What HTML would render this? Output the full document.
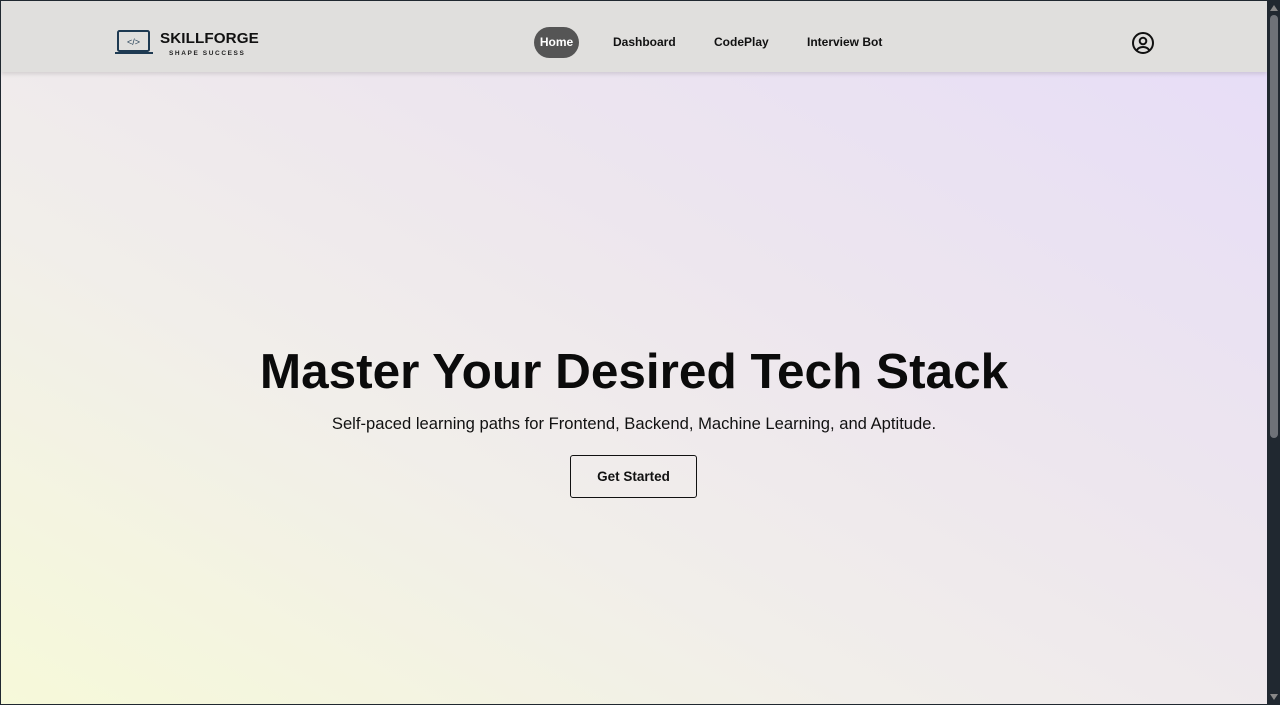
<!DOCTYPE html>
<html><head><meta charset="utf-8"><style>
*{margin:0;padding:0;box-sizing:border-box}
html,body{width:1280px;height:705px;overflow:hidden;font-family:"Liberation Sans",Arial,sans-serif}
body{background:#202830;position:relative}
.page{position:absolute;left:1px;top:1px;width:1266px;height:703px;overflow:hidden;
background:linear-gradient(to top right,#f6f9d9 0%,#f1eeea 35%,#ede6ee 60%,#e6dcf8 100%)}
header{position:absolute;left:0;top:0;width:100%;height:71px;background:#e0dfdd;box-shadow:0 2px 4px rgba(0,0,0,0.12)}
.logo{position:absolute;left:113px;top:28px}
.brand{position:absolute;left:159px;top:29px;font-weight:bold;font-size:15.2px;letter-spacing:0.1px;color:#111}
.tag{position:absolute;left:168px;top:49px;font-size:6.5px;letter-spacing:1.6px;color:#222;font-weight:bold}
nav a{position:absolute;top:26px;height:31px;line-height:31px;font-size:12px;font-weight:bold;color:#111;text-decoration:none}
.home{left:533px;width:45px;text-align:center;background:#555;color:#fff!important;border-radius:16px}
.user{position:absolute;left:1130px;top:30px}
h1{position:absolute;left:0;width:1266px;top:342px;text-align:center;font-size:49.5px;font-weight:bold;color:#0b0b0b}
p{position:absolute;left:0;width:1266px;top:413px;text-align:center;font-size:16.6px;color:#111}
.btn{position:absolute;left:569px;top:454px;width:127px;height:43px;border:1.5px solid #111;border-radius:3px;text-align:center;line-height:41px;font-size:13.5px;font-weight:bold;color:#111}
.sb{position:absolute;left:1267px;top:0;width:13px;height:705px;background:#202830}
.thumb{position:absolute;left:1270px;top:15px;width:8px;height:423px;background:#6e7278;border-radius:4px}
</style></head><body>
<div class="page">
<header>
<svg class="logo" width="40" height="28" viewBox="0 0 40 28"><rect x="4" y="2" width="31" height="20" rx="1.5" fill="none" stroke="#1e3a52" stroke-width="2"/><path d="M1 23h38v2H1z" fill="#1e3a52"/><text x="19.5" y="16" text-anchor="middle" font-family="Liberation Sans" font-size="9" fill="#1e3a52">&lt;/&gt;</text></svg>
<div class="brand">SKILLFORGE</div>
<div class="tag">SHAPE SUCCESS</div>
<nav><a class="home">Home</a><a style="left:612px">Dashboard</a><a style="left:713px">CodePlay</a><a style="left:806px">Interview Bot</a></nav>
<svg class="user" width="24" height="24" viewBox="0 0 24 24" fill="none" stroke="#111" stroke-width="2"><circle cx="12" cy="12" r="10"/><circle cx="12" cy="10" r="3.3"/><path d="M5.5 19.5c1.5-2.5 4-3.5 6.5-3.5s5 1 6.5 3.5"/></svg>
</header>
<h1>Master Your Desired Tech Stack</h1>
<p>Self-paced learning paths for Frontend, Backend, Machine Learning, and Aptitude.</p>
<div class="btn">Get Started</div>
</div>
<div class="sb"></div><div class="thumb"></div>
<svg style="position:absolute;left:1269px;top:4px" width="10" height="8"><path d="M5 1L9 7H1z" fill="#888"/></svg>
<svg style="position:absolute;left:1269px;top:693px" width="10" height="8"><path d="M5 7L9 1H1z" fill="#888"/></svg>
</body></html>
